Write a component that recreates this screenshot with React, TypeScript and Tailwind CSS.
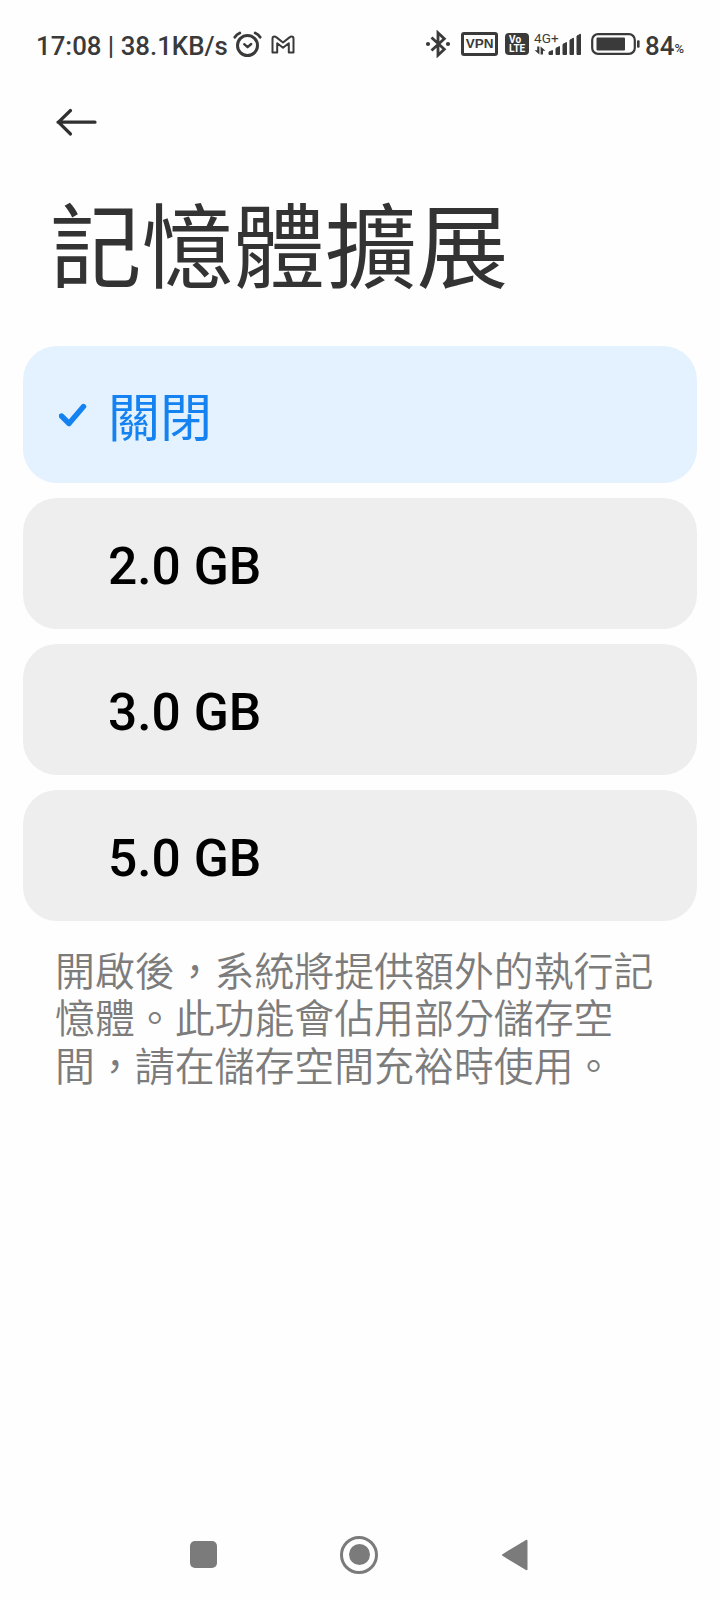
import React from "react";

type Option = { label: string; selected?: boolean };

const options: Option[] = [
  { label: "關閉", selected: true },
  { label: "2.0 GB" },
  { label: "3.0 GB" },
  { label: "5.0 GB" },
];

function AlarmIcon() {
  return (
    <svg className="ml-[3px] h-[28px] w-[30px] shrink-0" viewBox="0 0 30 28" fill="none" stroke="#3a3a3a" strokeLinecap="round">
      <circle cx="15.5" cy="15.5" r="10" strokeWidth="3" />
      <path d="M2.8 7.2Q4.5 4.3 7.8 3M28.2 7.2Q26.500 4.3 23.200 3" strokeWidth="2.800" />
      <path d="M12.200 14.200L15.600 17.200L19.200 14" strokeWidth="2.4" strokeLinejoin="round" />
    </svg>
  );
}

function MailIcon() {
  return (
    <svg className="mt-[1px] ml-[9px] h-[20px] w-[24px] shrink-0" viewBox="0 0 24 20" fill="none" stroke="#3a3a3a" strokeWidth="2" strokeLinejoin="round">
      <path d="M1.500 3.800Q1.500 1.500 3.500 1.500Q4.500 1.500 5.500 2.400L12 7.500L18.500 2.400Q19.500 1.500 20.500 1.500Q22.500 1.500 22.500 3.800V17.500H17.800V8.300L12 12.800L6.200 8.300V17.500H1.500Z" />
    </svg>
  );
}

function BluetoothIcon() {
  return (
    <svg className="h-[28px] w-[26px] shrink-0" viewBox="0 0 26 28" fill="none" stroke="#3a3a3a" strokeWidth="2.800">
      <path d="M6.500 7.500L19.300 19.300L13 25.200V2.800L19.300 8.700L6.500 20.500" />
      <circle cx="3" cy="14" r="2.100" fill="#3a3a3a" stroke="none" />
      <circle cx="23" cy="14" r="2.100" fill="#3a3a3a" stroke="none" />
    </svg>
  );
}

function SignalIcon() {
  return (
    <svg className="block h-[22px] w-[48px]" viewBox="0 0 48 22" fill="#3a3a3a">
      <path d="M3.200 13.500H5.400V21.500L0.600 17.300H3.200ZM6.600 13.500L11.500 17.800H9V21.500H6.600Z" />
      <g stroke="#3a3a3a" strokeWidth="1" strokeLinejoin="round">
        <path d="M15 19L18.500 17.500V21.500H15ZM22 15.300L25.500 13.500V21.500H22ZM29 11.300L32.500 9.500V21.500H29ZM36 7L39.500 5.200V21.500H36ZM43 3L46.500 1.200V21.500H43Z" />
      </g>
    </svg>
  );
}

function BatteryIcon() {
  return (
    <svg className="ml-[9px] h-[22px] w-[49px] shrink-0" viewBox="0 0 49 22">
      <rect x="1.200" y="1.200" width="42.600" height="19.600" rx="5.800" fill="none" stroke="#3a3a3a" strokeWidth="2.200" />
      <rect x="5.500" y="4.500" width="28.500" height="13" rx="1" fill="#3a3a3a" />
      <rect x="46" y="7.300" width="2.600" height="7.400" rx="1" fill="#3a3a3a" />
    </svg>
  );
}

function StatusBar() {
  return (
    <div className="flex h-[88px] items-center pr-[36px] pl-[36px] text-[#3a3a3a]">
      <span className="mt-[3px] w-[193px] text-[25.800px] leading-[30px] font-medium whitespace-nowrap">17:08 | 38.1KB/s</span>
      <AlarmIcon />
      <MailIcon />
      <div className="ml-auto flex items-center">
        <BluetoothIcon />
        <span className="ml-[10px] flex h-[24px] w-[37px] items-center justify-center rounded-[3px] border-[3px] border-[#3a3a3a] font-['Liberation_Sans',sans-serif] text-[13.500px] leading-none font-bold">VPN</span>
        <span className="ml-[7px] flex h-[22px] w-[24px] flex-col rounded-[4px] bg-[#3a3a3a] pt-[2px] pl-[4px] text-[10px] leading-[9px] font-bold text-white">
          <span>Vo</span>
          <span>LTE</span>
        </span>
        <div className="relative ml-[5px]">
          <SignalIcon />
          <span className="absolute -top-[2px] left-0 text-[13.500px] leading-[14px]">4G+</span>
        </div>
        <BatteryIcon />
        <span className="mt-[3px] ml-[5px] text-[25.800px] leading-[30px] font-medium">84</span>
        <span className="mt-[9px] text-[13px] leading-none font-medium">%</span>
      </div>
    </div>
  );
}

function OptionRow({ label, selected }: Option) {
  return (
    <li className={selected ? "flex h-[137px] items-center rounded-[34px] bg-[#e4f1ff] pl-[36px] text-[#1482f0]" : "flex h-[131px] items-center rounded-[34px] bg-[#eeeeee] pl-[36px] text-black"}>
      <span className="w-[49px]">
        {selected && (
          <svg className="mt-[2px] h-[25px] w-[28px]" viewBox="0 0 28 25" fill="none" stroke="#1482f0" strokeWidth="5.400" strokeLinecap="round" strokeLinejoin="round">
            <path d="M2.500 13L10 20.500L24.500 3.500" />
          </svg>
        )}
      </span>
      <span className={selected ? "mt-[11px] text-[52px] leading-[60px]" : "mt-[6px] text-[51.500px] leading-[60px] font-medium"}>{label}</span>
    </li>
  );
}

export default function App() {
  return (
    <div className="flex h-[1600px] w-[720px] flex-col overflow-hidden bg-[#fefefe] font-[Roboto,'Noto_Sans_CJK_TC',sans-serif]" lang="zh-Hant">
      <StatusBar />
      <header className="pl-[50px]">
        <svg className="mt-[19px] ml-[2px] h-[30px] w-[46px]" viewBox="0 0 46 30" fill="none" stroke="#303030" strokeWidth="3.200" strokeLinecap="round" strokeLinejoin="round">
          <path d="M43 15.200H6M18.500 3.500L6.500 15.200L18.500 27" />
        </svg>
        <h1 className="mt-[53px] text-[91.700px] leading-[120px] whitespace-nowrap text-[#333333]">記憶體擴展</h1>
      </header>
      <ul className="mt-[36px] flex flex-col gap-[15px] px-[23px]">
        {options.map((option) => (
          <OptionRow key={option.label} {...option} />
        ))}
      </ul>
      <p className="mt-[28px] ml-[55px] w-[620px] text-[39.900px] leading-[47.300px] font-[350] text-[#7c7c7c]">
        開啟後，系統將提供額外的執行記<br />憶體。此功能會佔用部分儲存空<br />間，請在儲存空間充裕時使用。
      </p>
      <nav className="mt-auto flex h-[91px] items-center justify-between pr-[192px] pl-[190px]">
        <span className="h-[27px] w-[27px] rounded-[5px] bg-[#7b7b7b]" />
        <span className="flex h-[38px] w-[38px] items-center justify-center rounded-full border-[3px] border-[#7b7b7b]">
          <span className="h-[21px] w-[21px] rounded-full bg-[#7b7b7b]" />
        </span>
        <svg className="h-[32px] w-[27px]" viewBox="0 0 27 32" fill="#7b7b7b" stroke="#7b7b7b" strokeWidth="2" strokeLinejoin="round">
          <path d="M2 16L25.500 1.800V30.200Z" />
        </svg>
      </nav>
    </div>
  );
}
